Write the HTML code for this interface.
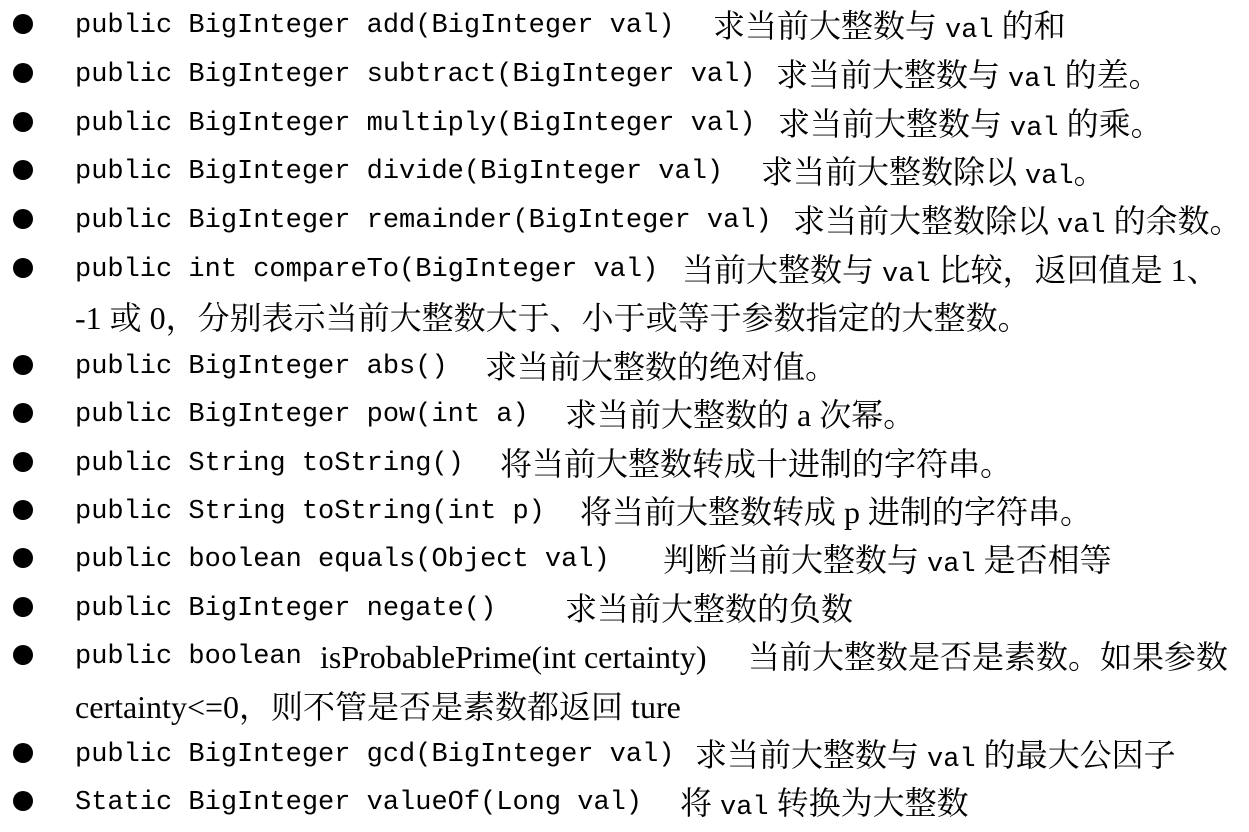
<!DOCTYPE html>
<html><head><meta charset="utf-8"><style>
body{margin:0;width:1249px;height:829px;background:#fff;position:relative;overflow:hidden;color:#000;}
.l{position:absolute;height:48px;line-height:48px;white-space:pre;margin-top:2px;}
.m{font-family:"Liberation Mono",monospace;font-size:27px;}
.c{font-family:"Liberation Serif","Noto Serif CJK SC",serif;font-size:32px;}
.t{font-family:"Liberation Serif",serif;font-size:32px;}
.b{position:absolute;left:13px;width:20px;height:20px;border-radius:50%;background:#000;}
</style></head><body>
<div class="b" style="top:14px"></div>
<div class="l m" style="left:75px;top:0">public BigInteger add(BigInteger val)</div>
<div class="l c" style="left:713px;top:0">求当前大整数与 <span class="m">val</span> 的和</div>

<div class="b" style="top:63px"></div>
<div class="l m" style="left:75px;top:49px">public BigInteger subtract(BigInteger val)</div>
<div class="l c" style="left:776px;top:49px">求当前大整数与 <span class="m">val</span> 的差。</div>

<div class="b" style="top:112px"></div>
<div class="l m" style="left:75px;top:98px">public BigInteger multiply(BigInteger val)</div>
<div class="l c" style="left:778px;top:98px">求当前大整数与 <span class="m">val</span> 的乘。</div>

<div class="b" style="top:160px"></div>
<div class="l m" style="left:75px;top:146px">public BigInteger divide(BigInteger val)</div>
<div class="l c" style="left:761px;top:146px">求当前大整数除以 <span class="m">val</span>。</div>

<div class="b" style="top:209px"></div>
<div class="l m" style="left:75px;top:195px">public BigInteger remainder(BigInteger val)</div>
<div class="l c" style="left:793px;top:195px">求当前大整数除以 <span class="m">val</span> 的余数。</div>

<div class="b" style="top:258px"></div>
<div class="l m" style="left:75px;top:244px">public int compareTo(BigInteger val)</div>
<div class="l c" style="left:682px;top:244px">当前大整数与 <span class="m">val</span> 比较，返回值是 1、</div>
<div class="l c" style="left:75px;top:292px">-1 或 0，分别表示当前大整数大于、小于或等于参数指定的大整数。</div>

<div class="b" style="top:355px"></div>
<div class="l m" style="left:75px;top:341px">public BigInteger abs()</div>
<div class="l c" style="left:485px;top:341px">求当前大整数的绝对值。</div>

<div class="b" style="top:403px"></div>
<div class="l m" style="left:75px;top:389px">public BigInteger pow(int a)</div>
<div class="l c" style="left:565px;top:389px">求当前大整数的 a 次幂。</div>

<div class="b" style="top:452px"></div>
<div class="l m" style="left:75px;top:438px">public String toString()</div>
<div class="l c" style="left:500px;top:438px">将当前大整数转成十进制的字符串。</div>

<div class="b" style="top:500px"></div>
<div class="l m" style="left:75px;top:486px">public String toString(int p)</div>
<div class="l c" style="left:580px;top:486px">将当前大整数转成 p 进制的字符串。</div>

<div class="b" style="top:548px"></div>
<div class="l m" style="left:75px;top:534px">public boolean equals(Object val)</div>
<div class="l c" style="left:663px;top:534px">判断当前大整数与 <span class="m">val</span> 是否相等</div>

<div class="b" style="top:597px"></div>
<div class="l m" style="left:75px;top:583px">public BigInteger negate()</div>
<div class="l c" style="left:565px;top:583px">求当前大整数的负数</div>

<div class="b" style="top:645px"></div>
<div class="l m" style="left:75px;top:631px">public boolean</div>
<div class="l t" style="left:320px;top:631px">isProbablePrime(int certainty)</div>
<div class="l c" style="left:748px;top:631px">当前大整数是否是素数。如果参数</div>
<div class="l c" style="left:75px;top:681px"><span class="t">certainty&lt;=0</span>，则不管是否是素数都返回 <span class="t">ture</span></div>

<div class="b" style="top:743px"></div>
<div class="l m" style="left:75px;top:729px">public BigInteger gcd(BigInteger val)</div>
<div class="l c" style="left:695px;top:729px">求当前大整数与 <span class="m">val</span> 的最大公因子</div>

<div class="b" style="top:791px"></div>
<div class="l m" style="left:75px;top:777px">Static BigInteger valueOf(Long val)</div>
<div class="l c" style="left:680px;top:777px">将 <span class="m">val</span> 转换为大整数</div>
</body></html>
